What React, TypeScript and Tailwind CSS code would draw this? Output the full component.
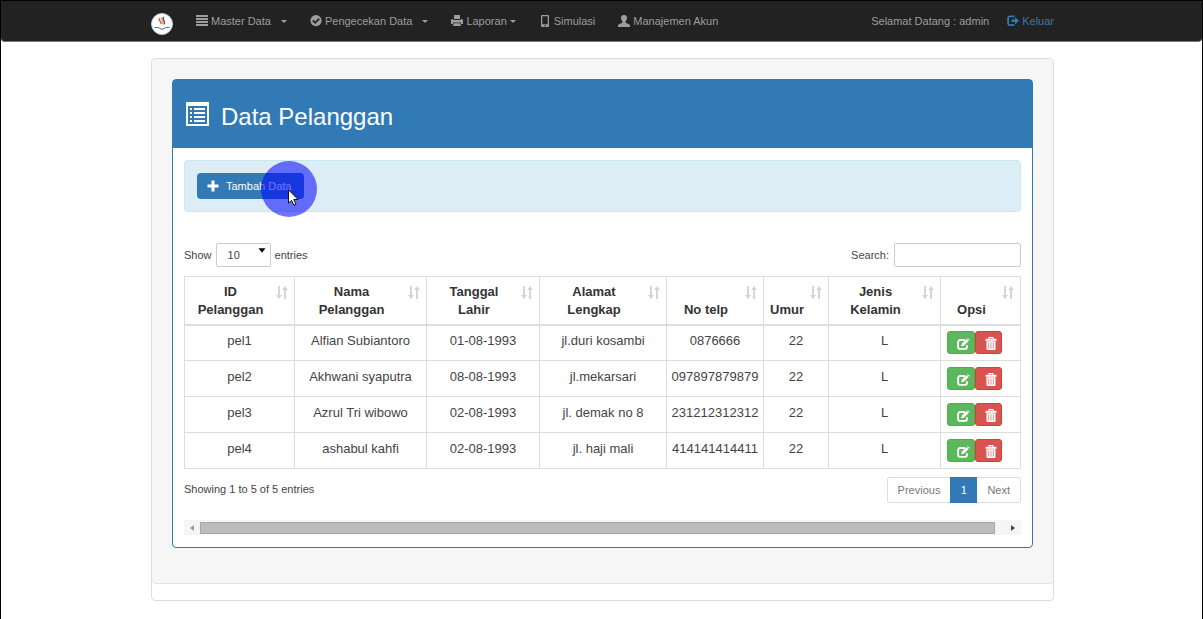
import type { ReactNode } from "react";

type IconProps = { className?: string };

const Lines = ({ className = "" }: IconProps) => (
  <svg viewBox="0 0 12 12" className={className} fill="currentColor" aria-hidden="true">
    <path d="M0 0h12v2H0zM0 3h12v2H0zM0 6h12v2H0zM0 9h12v2H0z" />
  </svg>
);
const Check = ({ className = "" }: IconProps) => (
  <svg viewBox="0 0 12 12" className={className} fill="none" aria-hidden="true">
    <circle cx="6" cy="5.6" r="5.6" fill="currentColor" />
    <path d="M2.8 5.4l2.400 2.400 4-4.200" stroke="#222" strokeWidth="1.800" />
  </svg>
);
const Printer = ({ className = "" }: IconProps) => (
  <svg viewBox="0 0 12 12" className={className} fill="currentColor" aria-hidden="true">
    <path d="M3 0h6v4H3zM1 4h1.200v1h7.600V4H11l1 1v4H10V7.500H2V9H0V5zM2.800 8.300h6.400L10.200 11H1.800z" />
  </svg>
);
const Phone = ({ className = "" }: IconProps) => (
  <svg viewBox="0 0 12 12" className={className} fill="currentColor" aria-hidden="true">
    <path
      fillRule="evenodd"
      d="M3 0h6a1 1 0 0 1 1 1v10a1 1 0 0 1-1 1H3a1 1 0 0 1-1-1V1a1 1 0 0 1 1-1zM3.300 1.300v8h5.400v-8zM5.400 10v1.200h1.200V10z"
    />
  </svg>
);
const User = ({ className = "" }: IconProps) => (
  <svg viewBox="0 0 12 12" className={className} fill="currentColor" aria-hidden="true">
    <path d="M6 0c2.100 0 3.100 1.300 3 3.100C8.900 4.800 8.200 5.900 7.600 6.500v1.300l3.300 1.500c.8.400 1.100.9 1.100 1.700v1H0v-1c0-.8.3-1.300 1.100-1.700l3.300-1.500V6.500C3.800 5.900 3.100 4.800 3 3.100 2.900 1.300 3.900 0 6 0z" />
  </svg>
);
const LogOut = ({ className = "" }: IconProps) => (
  <svg viewBox="0 0 12 12" className={className} aria-hidden="true">
    <path d="M7.500 1.300H3A1.900 1.900 0 0 0 1.100 3.200v5.100A1.900 1.900 0 0 0 3 10.200h4.500" fill="none" stroke="currentColor" strokeWidth="1.800" />
    <path d="M4.500 4.500h3.600V2L12 5.700 8.100 9.400V7H4.500z" fill="currentColor" />
  </svg>
);
const ListPanel = ({ className = "" }: IconProps) => (
  <svg viewBox="0 0 24 26" className={className} fill="currentColor" aria-hidden="true">
    <path fillRule="evenodd" d="M1 1h23v24H1zM3 5v18h19V5z" />
    <path d="M5 7h2v2H5zM9 7h11v2H9zM5 11h2v2H5zM9 11h11v2H9zM5 15h2v2H5zM9 15h11v2H9zM5 19h2v2H5zM9 19h11v2H9z" />
  </svg>
);
const Plus = ({ className = "" }: IconProps) => (
  <svg viewBox="0 0 12 12" className={className} fill="currentColor" aria-hidden="true">
    <path d="M4.500 0.500h3v4h4v3h-4v4h-3v-4h-4v-3h4z" />
  </svg>
);
const Edit = ({ className = "" }: IconProps) => (
  <svg viewBox="0 0 13 12" className={className} aria-hidden="true">
    <path d="M8 2H3.300A2.200 2.200 0 0 0 1.100 4.200v4.500a2.200 2.200 0 0 0 2.200 2.200h4.500A2.200 2.200 0 0 0 10 8.700V7.200" fill="none" stroke="currentColor" strokeWidth="1.900" />
    <path d="M4.200 8.300l.5-2.500L9.600 1l2 2-4.900 4.900zM10.200.5l.6-.5L12.700 1.900l-.6.600z" fill="currentColor" />
  </svg>
);
const Trash = ({ className = "" }: IconProps) => (
  <svg viewBox="0 0 12 13" className={className} aria-hidden="true">
    <path d="M4 2V.7h4V2" fill="none" stroke="currentColor" strokeWidth="1.200" />
    <path d="M.5 1.800h11v2H.5z" fill="currentColor" />
    <path d="M1.500 4.300h9V12a1 1 0 0 1-1 1h-7a1 1 0 0 1-1-1z" fill="currentColor" />
    <path d="M3.700 5.500v6M6 5.500v6M8.300 5.500v6" stroke="#e58080" strokeWidth=".9" />
  </svg>
);
const Sort = ({ className = "" }: IconProps) => (
  <svg viewBox="0 0 12 13" className={className} fill="currentColor" aria-hidden="true">
    <path d="M2 0h2v9h2L3 13 0 9h2zM8 13h2V4h2L9 0 6 4h2z" />
  </svg>
);
const Caret = ({ className = "" }: IconProps) => (
  <svg viewBox="0 0 6 3" className={className} fill="currentColor" aria-hidden="true">
    <path d="M0 0h6L3 3z" />
  </svg>
);
const Logo = ({ className = "" }: IconProps) => (
  <svg viewBox="0 0 22 22" className={className} aria-hidden="true">
    <circle cx="11" cy="11" r="10.500" fill="#fff" stroke="#b9cfe4" />
    <path d="M9 5q-1.500 1.600 0 3t.8 3" fill="none" stroke="#e2603c" strokeWidth="1.600" />
    <path d="M12.800 4q-1.500 1.600 0 3.400t.1 4" fill="none" stroke="#4a4290" strokeWidth="1.400" />
    <path d="M11.200 4.500q-1.300 1.700.1 3.500t.3 3.500" fill="none" stroke="#ef7b3d" strokeWidth="1" />
    <path d="M3.500 14.500q4-.8 7.500 2 3.500-2.800 7.500-2" fill="none" stroke="#4b6f91" strokeWidth="1" />
  </svg>
);

const Arrow = ({ className = "" }: IconProps) => (
  <svg viewBox="0 0 4 6" className={className} fill="currentColor" aria-hidden="true">
    <path d="M0 0l4 3-4 3z" />
  </svg>
);

function NavItem({ icon, children, menu }: { icon: ReactNode; children: ReactNode; menu?: ReactNode }) {
  return (
    <a href="#" className="flex items-center gap-[3px] whitespace-nowrap">
      {icon}
      <span>{children}</span>
      {menu}
    </a>
  );
}

const columns = [
  { label: "ID Pelanggan", width: "w-[110px]" },
  { label: "Nama Pelanggan", width: "w-[132px]" },
  { label: "Tanggal Lahir", width: "w-[113px]" },
  { label: "Alamat Lengkap", width: "w-[127px]" },
  { label: "No telp", width: "w-[97px]" },
  { label: "Umur", width: "w-[65px]" },
  { label: "Jenis Kelamin", width: "w-[112px]" },
  { label: "Opsi", width: "w-[80px]" },
];

const rows = [
  ["pel1", "Alfian Subiantoro", "01-08-1993", "jl.duri kosambi", "0876666", "22", "L"],
  ["pel2", "Akhwani syaputra", "08-08-1993", "jl.mekarsari", "097897879879", "22", "L"],
  ["pel3", "Azrul Tri wibowo", "02-08-1993", "jl. demak no 8", "231212312312", "22", "L"],
  ["pel4", "ashabul kahfi", "02-08-1993", "jl. haji mali", "414141414411", "22", "L"],
];

export default function App() {
  return (
    <div className="min-h-screen border-x border-black bg-white font-['Liberation_Sans',Arial,sans-serif] text-[11px] leading-4 text-[#444]">
      <header className="h-[42px] rounded-b-sm border-t border-b border-t-black border-b-[#777] bg-[#222] pl-0.5 text-[#9d9d9d]">
        <div className="mx-auto flex h-full max-w-[903px] items-center justify-between">
          <nav className="flex items-center">
            <a href="#" aria-label="Beranda" className="mt-1.5 mr-[23px]">
              <Logo className="size-[22px]" />
            </a>
            <div className="flex items-center gap-[23px]">
              <NavItem icon={<Lines className="size-3" />} menu={<Caret className="ml-[7px] h-[3px] w-1.5" />}>
                Master Data
              </NavItem>
              <NavItem icon={<Check className="size-3" />} menu={<Caret className="ml-[7px] h-[3px] w-1.5" />}>
                Pengecekan Data
              </NavItem>
              <NavItem icon={<Printer className="size-3" />} menu={<Caret className="h-[3px] w-1.5" />}>
                Laporan
              </NavItem>
              <NavItem icon={<Phone className="size-3" />}>Simulasi</NavItem>
              <NavItem icon={<User className="size-3" />}>Manajemen Akun</NavItem>
            </div>
          </nav>
          <div className="flex items-center gap-[18px]">
            <span>Selamat Datang : admin</span>
            <a href="#" className="flex items-center gap-[3px] text-[#317ab5]">
              <LogOut className="size-3" />
              Keluar
            </a>
          </div>
        </div>
      </header>

      <div className="pl-0.5">
        <main className="mx-auto mt-4 max-w-[903px] rounded-sm border border-[#ddd] bg-white pb-4">
          <div className="rounded-sm border-b border-[#e3e3e3] bg-[#f6f6f6] px-5 pt-5 pb-[35px]">
            <section className="rounded-sm border border-[#317ab5] bg-white">
              <div className="flex h-[68px] items-center bg-[#317ab5] px-3 text-white">
                <ListPanel className="h-[26px] w-6" />
                <h1 className="mt-1.5 ml-3 text-[24px] leading-7">Data Pelanggan</h1>
              </div>
              <div className="px-[11px] py-3">
                <div className="rounded-sm border border-[#c5e9f1] bg-[#dcedf6] p-3">
                  <div className="relative w-fit">
                    <button type="button" className="flex h-[26px] w-[107px] items-center gap-[7px] rounded-sm bg-[#317ab5] px-2.5 text-white">
                      <Plus className="size-3 shrink-0" />
                      <span className="whitespace-nowrap">Tambah Data</span>
                    </button>
                    <span className="pointer-events-none absolute -top-3 left-16 size-14 rounded-full bg-[#0000ff]/55" />
                    <svg viewBox="0 0 12 19" className="pointer-events-none absolute top-4 left-[91px] h-[19px] w-3" aria-hidden="true">
                      <path d="M.5 .8v13.500l3-3 2.300 5 2.200-1-2.200-4.800h4.300z" fill="#fff" stroke="#111" strokeWidth="1" />
                    </svg>
                  </div>
                </div>

                <div className="mt-[31px] mb-[9px] flex items-center justify-between">
                  <label className="flex items-center gap-1">
                    Show
                    <span className="relative">
                      <select className="h-6 w-[55px] appearance-none rounded-xs border border-[#ccc] bg-white pl-[11px]" defaultValue="10">
                        <option>10</option>
                        <option>25</option>
                        <option>50</option>
                      </select>
                      <Arrow className="pointer-events-none absolute top-1 right-1.5 h-[7px] w-[6px] rotate-90 text-black" />
                    </span>
                    entries
                  </label>
                  <label className="flex items-center gap-[5px]">
                    Search:
                    <input type="search" className="h-6 w-[127px] rounded-xs border border-[#ccc] px-2" />
                  </label>
                </div>

                <table className="w-full table-fixed border-collapse text-center text-[13px] leading-[18px]">
                  <thead>
                    <tr className="h-12">
                      {columns.map((c) => (
                        <th key={c.label} className={`${c.width} relative border border-b-2 border-[#ddd] py-[5px] pr-[23px] pl-[5px] align-bottom text-[#333]`}>
                          {c.label}
                          <Sort className="absolute top-[9px] right-1.5 h-[13px] w-3 text-[#d5d5d5]" />
                        </th>
                      ))}
                    </tr>
                  </thead>
                  <tbody>
                    {rows.map((r) => (
                      <tr key={r[0]} className="h-9">
                        {r.map((v, i) => (
                          <td key={i} className="border border-[#ddd] pb-1 whitespace-nowrap">
                            {v}
                          </td>
                        ))}
                        <td className="border border-[#ddd] px-1.5">
                          <div className="flex">
                            <button type="button" aria-label="Ubah" className="flex h-[23px] w-7 items-center justify-end rounded-[3px] border border-[#4cae4c] bg-[#5cb85c] pr-1 text-white">
                              <Edit className="mt-0.5 h-3 w-[13px]" />
                            </button>
                            <button type="button" aria-label="Hapus" className="flex h-[23px] w-[27px] items-center justify-end rounded-[3px] border border-[#d43f3a] bg-[#d9534f] pr-1 text-white">
                              <Trash className="mt-0.5 h-[13px] w-3" />
                            </button>
                          </div>
                        </td>
                      </tr>
                    ))}
                  </tbody>
                </table>

                <div className="mt-2 flex items-start justify-between">
                  <p className="mt-1">Showing 1 to 5 of 5 entries</p>
                  <div className="flex h-[26px] rounded-xs border border-[#ddd] text-[#777]">
                    <button type="button" className="px-2.5">Previous</button>
                    <button type="button" className="-my-px w-[27px] bg-[#317ab5] text-white">1</button>
                    <button type="button" className="px-2.5">Next</button>
                  </div>
                </div>

                <div className="mt-[17px] flex h-[15px] items-center bg-[#f5f5f5]">
                  <Arrow className="mx-1.5 h-1.5 w-1 rotate-180 text-[#999]" />
                  <div className="h-3 w-[95%] border border-[#a8a8a8] bg-[#bcbcbc]" />
                  <Arrow className="mr-1.5 ml-auto h-1.5 w-1 text-[#444]" />
                </div>
              </div>
            </section>
          </div>
        </main>
      </div>
    </div>
  );
}
